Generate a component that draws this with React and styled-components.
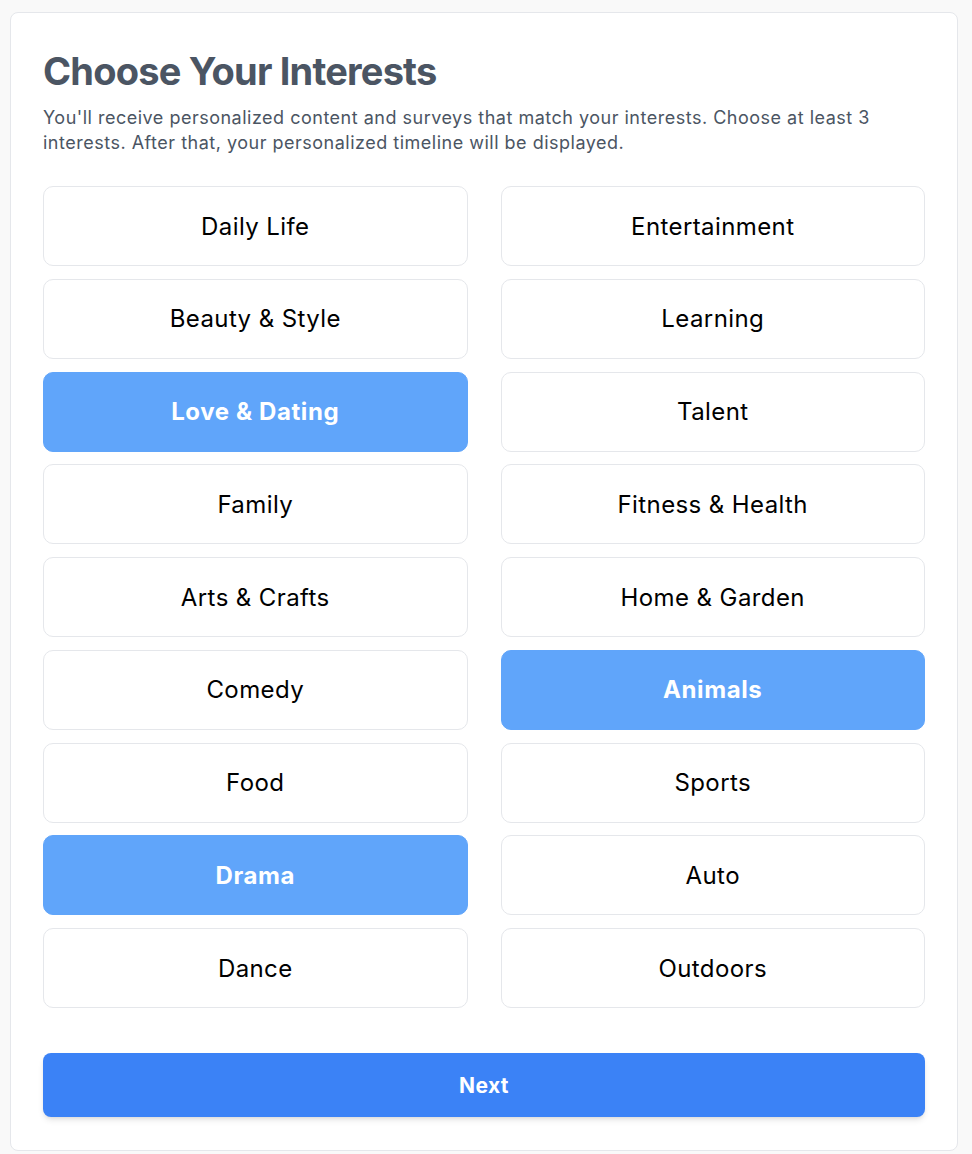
import React, { useState } from 'react';
import styled, { createGlobalStyle } from 'styled-components';

const GlobalStyle = createGlobalStyle`
	html, body {
		margin: 0;
		padding: 0;
		background-color: #f9f9f9;
		font-family: Inter, "Noto Sans", "Liberation Sans", sans-serif;
	}
	* {
		box-sizing: border-box;
	}
`;

const Page = styled.div`
	padding: 12px 14px 4px 10px;
	min-height: 1154px;
`;

const Card = styled.div`
	background-color: #fff;
	border: 1px solid #e5e7eb;
	border-radius: 8px;
	padding: 35px 32px 33px 32px;
`;

const Title = styled.h1`
	margin: 0;
	font-size: 38px;
	line-height: 46px;
	font-weight: 700;
	color: #4b5563;
	letter-spacing: -0.8px;
`;

const Subtitle = styled.p`
	margin: 11px 0 31px 0;
	font-size: 18px;
	line-height: 25px;
	color: #4b5563;
	letter-spacing: 0.5px;
`;

const Grid = styled.div`
	display: grid;
	grid-template-columns: 1fr 1fr;
	column-gap: 33px;
	row-gap: 12.75px;
`;

const Option = styled.button`
	height: 80px;
	border-radius: 10px;
	border: 1px solid ${(p) => (p.$selected ? '#60a5fa' : '#e5e7eb')};
	background-color: ${(p) => (p.$selected ? '#60a5fa' : '#fff')};
	color: ${(p) => (p.$selected ? '#fff' : '#000')};
	font-family: inherit;
	font-size: 24px;
	letter-spacing: ${(p) => (p.$selected ? '0.6px' : '0.4px')};
	font-weight: ${(p) => (p.$selected ? 700 : 400)};
	cursor: pointer;
	padding: 0;
`;

const NextButton = styled.button`
	margin-top: 45px;
	width: 100%;
	height: 64px;
	border: none;
	border-radius: 8px;
	background-color: #3b82f6;
	color: #fff;
	font-family: inherit;
	font-size: 21px;
	font-weight: 700;
	letter-spacing: 0.4px;
	box-shadow: 0 4px 6px -1px rgba(0, 0, 0, 0.1), 0 2px 4px -2px rgba(0, 0, 0, 0.1);
	cursor: pointer;
`;

const interests = [
	'Daily Life',
	'Entertainment',
	'Beauty & Style',
	'Learning',
	'Love & Dating',
	'Talent',
	'Family',
	'Fitness & Health',
	'Arts & Crafts',
	'Home & Garden',
	'Comedy',
	'Animals',
	'Food',
	'Sports',
	'Drama',
	'Auto',
	'Dance',
	'Outdoors',
];

const App = () => {
	const [selected, setSelected] = useState(['Love & Dating', 'Animals', 'Drama']);

	const toggle = (name) => {
		setSelected((prev) =>
			prev.includes(name) ? prev.filter((n) => n !== name) : [...prev, name]
		);
	};

	return (
		<>
			<GlobalStyle />
			<Page>
				<Card>
					<Title>Choose Your Interests</Title>
					<Subtitle>
						You'll receive personalized content and surveys that match your
						interests. Choose at least 3 interests. After that, your
						personalized timeline will be displayed.
					</Subtitle>
					<Grid>
						{interests.map((name) => (
							<Option
								key={name}
								$selected={selected.includes(name)}
								onClick={() => toggle(name)}
							>
								{name}
							</Option>
						))}
					</Grid>
					<NextButton>Next</NextButton>
				</Card>
			</Page>
		</>
	);
};

export default App;
